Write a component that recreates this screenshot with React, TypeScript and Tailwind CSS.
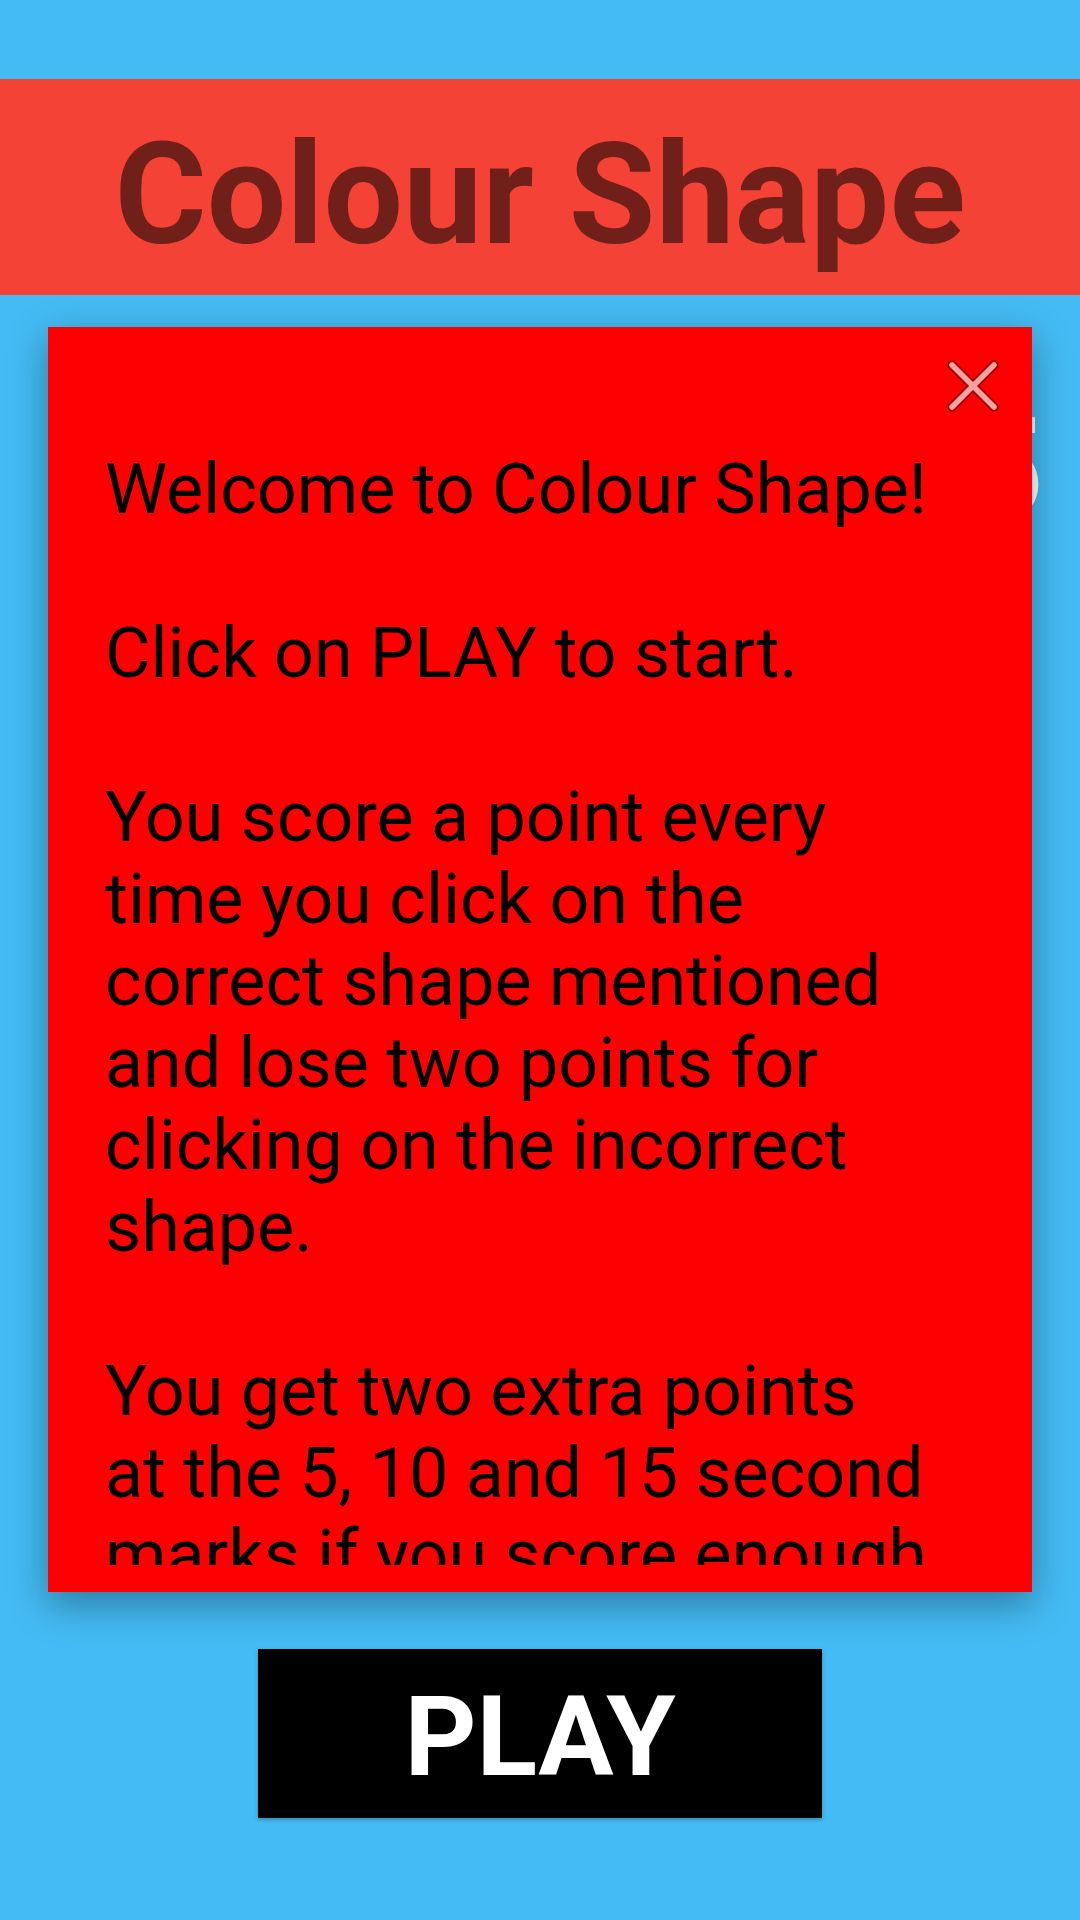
/**
 * Colour Shape start screen with the instructions dialog open.
 */

const INSTRUCTIONS: string[] = [
  "Welcome to Colour Shape!",
  "",
  "Click on PLAY to start.",
  "",
  "You score a point every",
  "time you click on the",
  "correct shape mentioned",
  "and lose two points for",
  "clicking on the incorrect",
  "shape.",
  "",
  "You get two extra points",
  "at the 5, 10 and 15 second",
  "marks if you score enough",
  "points.",
];

/** Pink close cross with a thin dark edge. */
function CloseIcon(): React.ReactElement {
  return (
    <svg viewBox="0 0 52 52" className="w-[52px] h-[52px]" fill="none" aria-hidden="true">
      <path d="M5 5L47 47M47 5L5 47" stroke="#8a0c0c" strokeWidth="9" strokeLinecap="round" />
      <path d="M5 5L47 47M47 5L5 47" stroke="#ffa0a0" strokeWidth="5.5" strokeLinecap="round" />
    </svg>
  );
}

export default function App(): React.ReactElement {
  return (
    <div className="relative w-[1080px] h-[1920px] overflow-hidden bg-[#44bbf4] font-['Roboto',sans-serif]">
      {/* ── Title bar ─────────────────────────────────────────── */}
      <div className="h-[79px]" />
      <header className="h-[216px] bg-[#f44336] flex justify-center pt-[45px]">
        <h1 className="text-[141px] leading-none font-bold text-[#701f19] whitespace-nowrap">
          Colour Shape
        </h1>
      </header>

      {/* ── Game area behind the dialog (timer peeks out) ─────── */}
      <div className="h-[1354px] flex justify-end pr-[36px] pt-[104px]">
        <span className="text-[140px] leading-none font-bold text-white">5</span>
      </div>

      {/* ── Play button ───────────────────────────────────────── */}
      <div className="flex justify-center">
        <button className="w-[564px] h-[169px] bg-black flex items-center justify-center shadow-[0_2px_4px_rgba(0,0,0,0.25)]">
          <span className="text-[112px] leading-none font-bold text-white pt-[6px]">PLAY</span>
        </button>
      </div>

      {/* ── Instructions dialog ───────────────────────────────── */}
      <div className="absolute top-[327px] left-[48px] w-[984px] h-[1265px] bg-[#ff0000] shadow-[0_12px_36px_rgba(0,0,0,0.35)]">
        <button className="absolute top-[33px] right-[33px]" aria-label="Close">
          <CloseIcon />
        </button>
        <div className="h-[1238px] overflow-hidden pt-[121px] pl-[57px] text-black text-[70px] leading-[82px]">
          {INSTRUCTIONS.map((line, i) => (
            <div key={i} className="whitespace-nowrap h-[82px]">
              {line}
            </div>
          ))}
        </div>
      </div>
    </div>
  );
}
